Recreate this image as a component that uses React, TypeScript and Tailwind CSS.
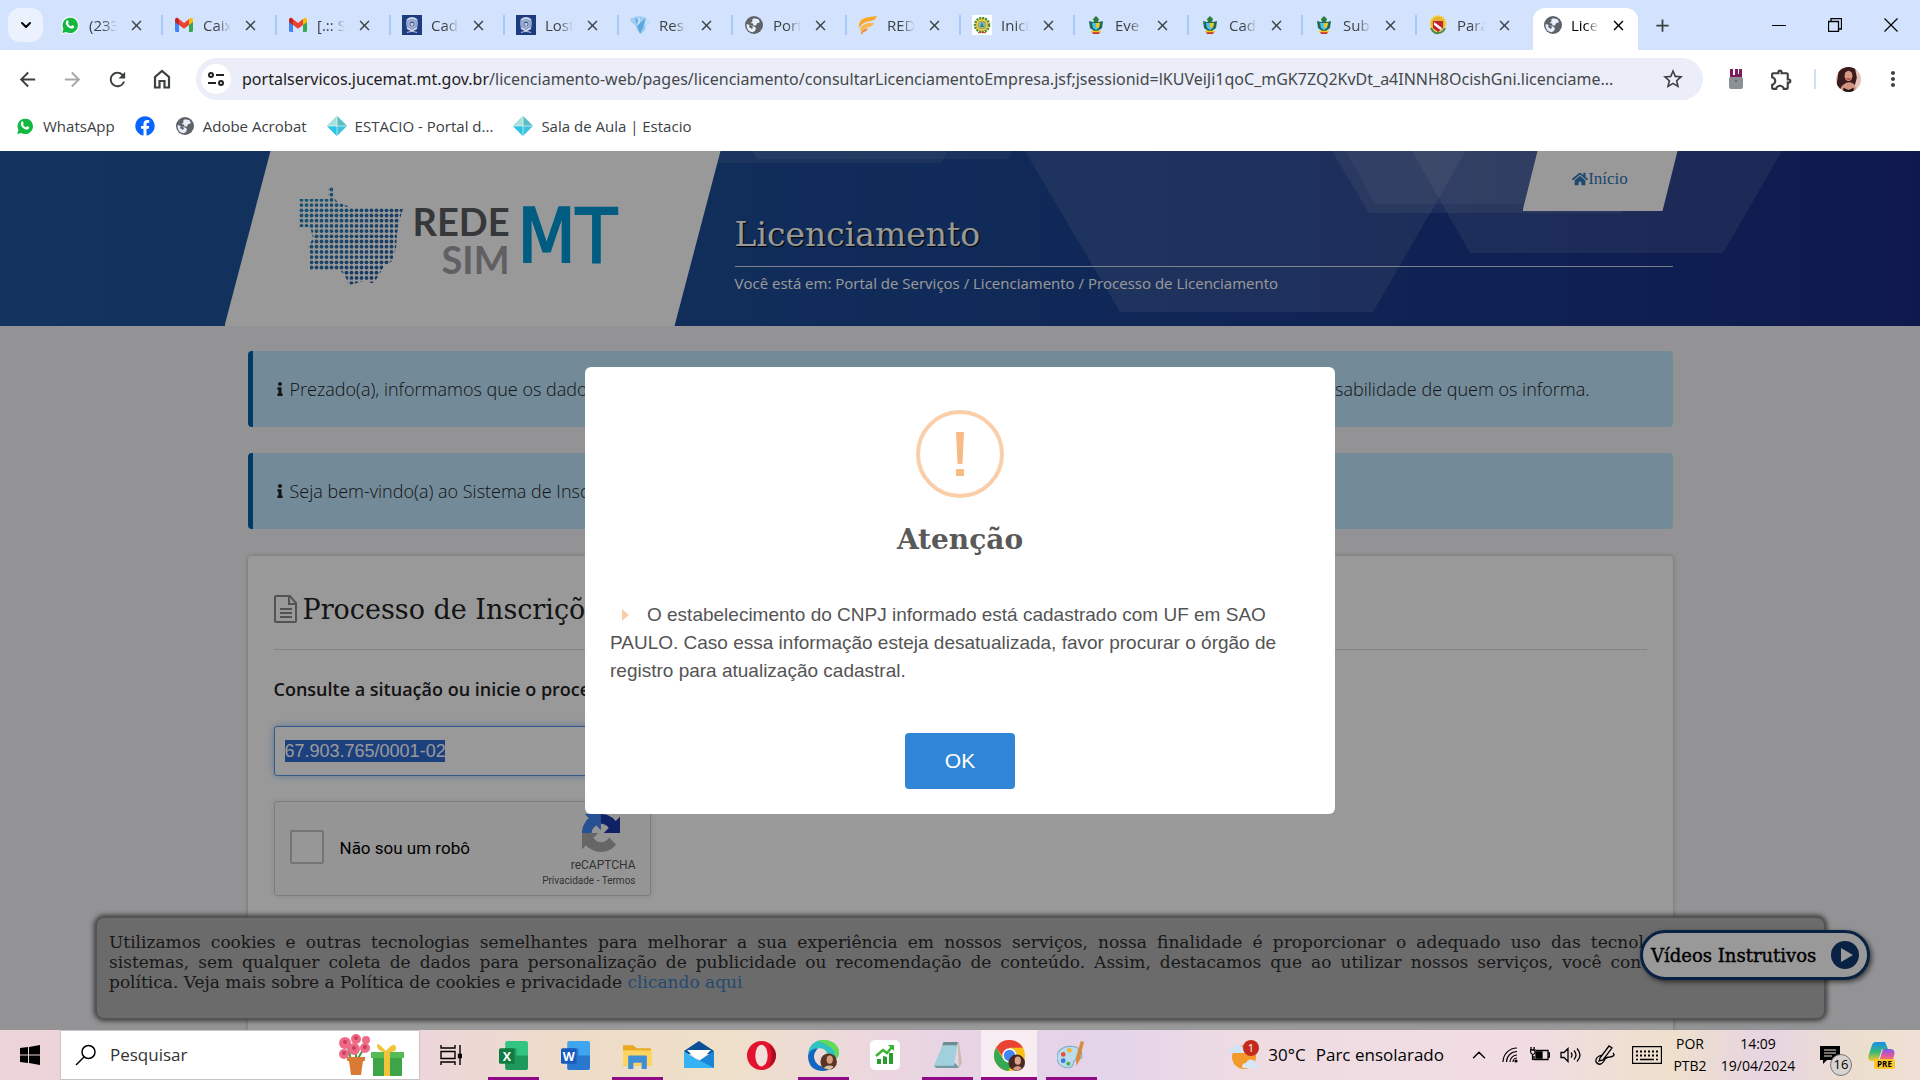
import React from "react";
import {
  MdArrowBack,
  MdArrowForward,
  MdRefresh,
  MdOutlineHome,
  MdStarBorder,
  MdOutlineExtension,
  MdMoreVert,
  MdClose,
  MdAdd,
} from "react-icons/md";
import { FaInfo, FaHome, FaFacebook } from "react-icons/fa";
import { ChevronDown, ChevronUp } from "lucide-react";

const UI = "font-['Open_Sans','Noto_Sans',sans-serif]";
const SLAB = "font-['DejaVu_Serif',serif]";

function WhatsApp() {
  return (
    <svg viewBox="0 0 20 20" className="h-5 w-5 shrink-0">
      <path d="M1 19.300l1.400-4.800A8.800 8.800 0 1 1 5.600 17.800z" fill="#fff" />
      <path d="M2.200 18l1.200-4.100A7.700 7.700 0 1 1 6.200 16.900z" fill="#12b83f" />
      <path d="M6.800 5.600c.5-.5 1-.4 1.200 0l.7 1.600c.1.400-.5 1-.7 1.200.6 1.300 1.700 2.300 3.200 2.900.4-.4.800-1.100 1.200-1l1.600.8c.4.300.1 2-1.300 2.400-1.300.4-3.700-.4-5.400-2.300C5.600 9.400 5.200 7 6.800 5.600z" fill="#fff" />
    </svg>
  );
}

function Gmail() {
  return (
    <svg viewBox="0 0 20 16" className="h-4 w-5 shrink-0">
      <path d="M1 3v10.500Q1 15 2.500 15H5V6z" fill="#4285f4" />
      <path d="M15 6v9h2.500Q19 15 19 13.500V3z" fill="#34a853" />
      <path d="M15 2.500V8l4-3V3c0-2-2-2.700-3.300-1.700z" fill="#fbbc04" />
      <path d="M5 2.500V8L1 5V3c0-2 2-2.700 3.300-1.700z" fill="#c5221f" />
      <path d="M5 2l5 4 5-4v6l-5 3.800L5 8z" fill="#ea4335" />
    </svg>
  );
}

function Police() {
  return (
    <svg viewBox="0 0 20 20" className="h-5 w-5 shrink-0">
      <rect width="20" height="20" fill="#1d3b80" />
      <path d="M5 4q5-4 10 0 2 4 0 9l-5 3-5-3Q3 8 5 4z" fill="#8fa2cc" />
      <path d="M5 5q5-4 10 0M5 13l5 3 5-3" fill="none" stroke="#d3dae9" strokeWidth="1.500" />
      <circle cx="10" cy="9" r="3.200" fill="#3a568f" stroke="#c5cee2" />
      <path d="M8.500 8h3v2l-1.500 1.500L8.500 10z" fill="#c5cee2" />
      <path d="M5 17.500q5-2 10 0" stroke="#b9c3da" strokeWidth="1.200" fill="none" />
    </svg>
  );
}

function Globe() {
  return (
    <svg viewBox="0 0 20 20" className="h-5 w-5 shrink-0">
      <circle cx="10" cy="10" r="9" fill="#5f6368" />
      <path d="M10 3.200l4.500 1 1.500 3-3 1-1 2.300H9.500l-.5-2L6.500 8l2-1.500-.3-2z" fill="#e8effc" />
      <path d="M2.600 9l4.700 1.500 2.700 1 2 1.500-1 3-2.500 1.200q-5.500-1-5.900-6.200z" fill="#e8effc" />
      <path d="M6 9.500l3 2.500-1 2-3-2z" fill="#5f6368" />
    </svg>
  );
}

function Bird() {
  return (
    <svg viewBox="0 0 20 20" className="h-5 w-5 shrink-0">
      <path d="M0 4l5-2 5-1 6 2 4 4-4 3-1 5-4 4-4-4-2-5-4-3z" fill="#9ccdf2" />
      <path d="M5 2l5 6 6-5-3 10-3 6-3-8z" fill="#5ea8e2" />
      <path d="M10 1v7l-4 4zM16 3l-2 8 6-4z" fill="#c4e2f8" />
    </svg>
  );
}

function Wing() {
  return (
    <svg viewBox="0 0 20 20" className="h-5 w-5 shrink-0">
      <path d="M1 9Q2 3 12 2l7-1q-1 4-6 5Q4 7 1 13z" fill="#f9a825" />
      <path d="M2 14q2-5 9-6h5q-1 3-5 4-6 1-8 5z" fill="#fbb847" />
      <path d="M3 18q1-4 7-5-1 3-4 4-2 .5-2 3z" fill="#f08c2e" />
    </svg>
  );
}

function Seal() {
  return (
    <svg viewBox="0 0 20 20" className="h-5 w-5 shrink-0">
      <rect width="20" height="20" fill="#fff" />
      <circle cx="10" cy="10" r="7" fill="#f4d745" stroke="#4d8a3a" strokeWidth="2.500" strokeDasharray="2 1" />
      <circle cx="10" cy="10" r="4" fill="#7ab8dc" stroke="#c69a2c" />
      <path d="M8 12l2-5 2 5z" fill="#3b8f4a" />
      <path d="M6 18q4-2 8 0" stroke="#c0392b" fill="none" />
    </svg>
  );
}

function Crest() {
  return (
    <svg viewBox="0 0 20 20" className="h-5 w-5 shrink-0">
      <path d="M7 4l3-3 3 3-1 3H8z" fill="#2a7d3a" />
      <path d="M3 6l4 1h6l4-1-1 7-4 3H8l-4-3z" fill="#1f6a5b" />
      <path d="M6 8h8l-1 5-3 2-3-2z" fill="#4fc0e8" />
      <path d="M10 8h4l-1 4-3 1z" fill="#f5c518" />
      <path d="M6 17h8l-1 2H7z" fill="#c9342b" />
      <path d="M5 16.500h10" stroke="#f5c518" strokeWidth="1.500" />
    </svg>
  );
}

function ParaCrest() {
  return (
    <svg viewBox="0 0 20 20" className="h-5 w-5 shrink-0">
      <circle cx="10" cy="8.500" r="7.500" fill="#e9b52c" stroke="#f4d03f" strokeWidth="2" strokeDasharray="1.500 1" />
      <path d="M5 6h10v7l-5 4-5-4z" fill="#c0262b" />
      <path d="M6 7l8 6-1.500 2L6 10z" fill="#fff" />
      <path d="M3 13q3 6 7 5 5 0 7-5" stroke="#4d8a3a" strokeWidth="2" fill="none" />
    </svg>
  );
}

function Diamond() {
  return (
    <svg viewBox="0 0 20 20" className="h-5 w-5 shrink-0">
      <path d="M10 0l10 10-10 10L0 10z" fill="#3fc3dc" />
      <path d="M10 0v10H0z" fill="#a9e0dc" />
      <path d="M10 0v10h10z" fill="#5dbfc0" />
      <path d="M10 10v10L0 10z" fill="#29c4e8" />
      <path d="M0 10h20M10 0v20" stroke="#fff" strokeWidth=".6" />
    </svg>
  );
}

function Avatar({ className }: { className: string }) {
  return (
    <svg viewBox="0 0 24 24" className={className}>
      <defs>
        <clipPath id="avatar-clip">
          <circle cx="12" cy="12" r="12" />
        </clipPath>
      </defs>
      <g clipPath="url(#avatar-clip)">
        <rect width="24" height="24" fill="#e3c4b8" />
        <path d="M3 0h15l2 10-2 8H6l-3 5-3-2z" fill="#3a1a1c" />
        <ellipse cx="12" cy="8.500" rx="3.800" ry="5" fill="#d79b83" />
        <path d="M6 18q6-6 12-1l2 7H5z" fill="#cf957f" />
        <path d="M7 20l5 2 5-2v4H7z" fill="#231417" />
        <path d="M10 11q2 1.300 4 0" stroke="#a32735" fill="none" />
      </g>
    </svg>
  );
}

const tabs = [
  { label: "(233", icon: <WhatsApp /> },
  { label: "Caix", icon: <Gmail /> },
  { label: "[.:: S", icon: <Gmail /> },
  { label: "Cad", icon: <Police /> },
  { label: "Lost", icon: <Police /> },
  { label: "Res", icon: <Bird /> },
  { label: "Port", icon: <Globe /> },
  { label: "RED", icon: <Wing /> },
  { label: "Inici", icon: <Seal /> },
  { label: "Eve", icon: <Crest /> },
  { label: "Cad", icon: <Crest /> },
  { label: "Sub", icon: <Crest /> },
  { label: "Par\u00e1", icon: <ParaCrest /> },
];

function TabLabel({ text }: { text: string }) {
  return (
    <span className="w-7 whitespace-nowrap [mask-image:linear-gradient(to_right,black_50%,transparent)]">
      {text}
    </span>
  );
}

function TabStrip() {
  return (
    <div className="flex h-[50px] shrink-0 items-center bg-[#d3e3fd] pl-2 text-[15px] text-[#3c4043]">
      <button aria-label="Pesquisar guias" className="flex h-[34px] w-[35px] items-center justify-center rounded-xl bg-[#ebf2fe]">
        <ChevronDown size={16} strokeWidth={3} className="text-black" />
      </button>
      <div className="ml-[6px] flex">
        {tabs.map((t, i) => (
          <div key={i} className="flex h-5 w-[114px] items-center border-r-2 border-[#a8c7fa] pl-[11px] nth-[13]:border-transparent">
            {t.icon}
            <span className="w-[9px]" />
            <TabLabel text={t.label} />
            <button aria-label={"Fechar " + t.label} className="ml-[11px]">
              <MdClose size={17} className="text-[#3c4043]" />
            </button>
          </div>
        ))}
      </div>
      <div className="ml-[2px] flex h-[42px] w-[105px] items-center self-end rounded-t-xl bg-white pb-2 pl-[10px] text-black">
        <Globe />
        <span className="w-2" />
        <TabLabel text="Lice" />
        <button aria-label="Fechar guia" className="ml-[11px]">
          <MdClose size={17} />
        </button>
      </div>
      <button aria-label="Nova guia" className="ml-[14px]">
        <MdAdd size={21} />
      </button>
      <div className="ml-auto flex items-center gap-[42px] pr-[22px] text-black">
        <button aria-label="Minimizar">
          <svg width="14" height="14"><path d="M0 7.500h14" stroke="currentColor" /></svg>
        </button>
        <button aria-label="Restaurar">
          <svg width="14" height="14" fill="none" stroke="currentColor">
            <path d="M.5 3.500h10v10H.5zM3 3V.5h10.500V11H11" strokeWidth="1.300" />
          </svg>
        </button>
        <button aria-label="Fechar">
          <svg width="14" height="14"><path d="M.5.5l13 13M13.500.5l-13 13" stroke="currentColor" strokeWidth="1.200" /></svg>
        </button>
      </div>
    </div>
  );
}

function Toolbar() {
  return (
    <div className="flex h-[58px] shrink-0 items-center bg-white pr-[15px] pl-4 text-[#3c4043]">
      <div className="flex w-[180px] shrink-0 items-center gap-[22px]">
        <button aria-label="Voltar"><MdArrowBack size={23} /></button>
        <button aria-label="Avançar" className="text-[#a5a7aa]"><MdArrowForward size={23} /></button>
        <button aria-label="Recarregar"><MdRefresh size={23} /></button>
        <button aria-label="Página inicial">
          <svg width="22" height="22" viewBox="0 0 22 22" fill="none" stroke="currentColor" strokeWidth="2.200">
            <path d="M4 9v10.500h4.500V13h5v6.500H18V9l-7-6z" />
          </svg>
        </button>
      </div>
      <div className="flex h-[42px] min-w-0 flex-1 items-center rounded-full bg-[#ebeef8] pr-[18px] pl-[5px]">
        <button aria-label="Informações do site" className="flex h-[30px] w-[30px] shrink-0 items-center justify-center rounded-full bg-white">
          <svg width="16" height="16" viewBox="0 0 16 16" fill="none" stroke="#202124" strokeWidth="2">
            <circle cx="3" cy="4" r="2" />
            <path d="M8 4h8M0 12h8" />
            <circle cx="13" cy="12" r="2" />
          </svg>
        </button>
        <div className="ml-[11px] min-w-0 flex-1 font-['Noto_Sans',sans-serif] text-[16px] whitespace-nowrap text-[#45484c]">
          <span className="text-[#1f2023]">portalservicos.jucemat.mt.gov.br</span>
          /licenciamento-web/pages/licenciamento/consultarLicenciamentoEmpresa.jsf;jsessionid=lKUVeiJi1qoC_mGK7ZQ2KvDt_a4INNH8OcishGni.licenciame...
        </div>
        <button aria-label="Adicionar aos favoritos"><MdStarBorder size={24} /></button>
      </div>
      <div className="ml-6 flex items-center">
        <svg width="18" height="22" viewBox="0 0 18 22">
          <path d="M3 1h12v9H3z" fill="#7b1c5c" />
          <path d="M6 1h2v6H6zM11 1h1v5h-1z" fill="#fff" />
          <rect x="2" y="9" width="14" height="12" rx="2" fill="#8b9196" />
          <circle cx="9" cy="13" r="1" fill="#5b6064" />
        </svg>
        <button aria-label="Extensões" className="ml-6"><MdOutlineExtension size={25} /></button>
        <span className="ml-5 h-5 w-[2px] bg-[#cfe0fc]" />
        <Avatar className="ml-5 h-[25px] w-[25px]" />
        <button aria-label="Menu" className="ml-5"><MdMoreVert size={24} /></button>
      </div>
    </div>
  );
}

function Bookmarks() {
  const item = "flex items-center gap-2 leading-5";
  return (
    <nav className="flex h-[43px] shrink-0 items-start bg-white pt-2 pl-[15px] text-[15px] text-[#3c4043]">
      <a href="#" className={item}><WhatsApp />WhatsApp</a>
      <a href="#" aria-label="Facebook" className="ml-5 rounded-full text-[#0866ff]"><FaFacebook size={20} /></a>
      <a href="#" className={item + " ml-5"}><Globe />Adobe Acrobat</a>
      <a href="#" className={item + " ml-5"}><Diamond />ESTACIO - Portal d...</a>
      <a href="#" className={item + " ml-5"}><Diamond />Sala de Aula | Estacio</a>
    </nav>
  );
}

function StateMap() {
  return (
    <svg viewBox="0 0 104 98" className="h-[98px] w-[104px] shrink-0">
      <defs>
        <linearGradient id="mapfade" x1="0" y1="0" x2="1" y2="1">
          <stop offset="0" stopColor="#2f8fc4" />
          <stop offset="1" stopColor="#24539c" />
        </linearGradient>
        <mask id="dotmask">
          <rect width="104" height="98" fill="#000" />
          {Array.from({ length: 19 }, (_, r) =>
            Array.from({ length: 21 }, (_, c) => (
              <circle key={r + "-" + c} cx={2.5 + c * 5} cy={2.5 + r * 5.2} r="1.900" fill="#fff" />
            ))
          )}
        </mask>
      </defs>
      <path
        d="M29 0h5l1 11 5 5 12 4 52 2-4 13-2 12-1 15-4 12-8 5-5 9-5 8h-3l-4-3-10 3-8 2-4-9-5-6H11l0-18-2-5 5-9-3-11H0V12h29z"
        fill="url(#mapfade)"
        mask="url(#dotmask)"
      />
    </svg>
  );
}

function Logo() {
  return (
    <div className="flex items-center">
      <StateMap />
      <div className="mt-2 ml-[10px] flex flex-col items-end font-['Lato',sans-serif] text-[38px] leading-[38px] font-bold">
        <span className="text-[#5a5d60]">REDE</span>
        <span className="text-[#a0a1a6]">SIM</span>
      </div>
      <span className="ml-2 font-['DejaVu_Sans_Condensed','Lato',sans-serif] text-[75px] leading-[80px] text-[#009ad8] [-webkit-text-stroke:2px_#009ad8]">MT</span>
    </div>
  );
}

function SiteHeader() {
  return (
    <header className="relative h-[175px] bg-linear-to-r from-[#20589f] via-[#1c4794] to-[#192b82]">
      <svg viewBox="0 0 1920 175" preserveAspectRatio="none" className="absolute inset-0 h-full w-full" fill="#fff">
        <path d="M719 0h228l-6 12H717z" opacity=".08" />
        <path d="M752 0h261l-5 8H757z" opacity=".08" />
        <path d="M1025 0h441l-93 161h-253z" opacity=".1" />
        <path d="M1332 0h330l-41 62h-252z" opacity=".1" />
        <path d="M1346 0h192l-13 53h-150z" opacity=".07" />
        <path d="M1412 0h370l-59 102h-253z" opacity=".1" />
      </svg>
      <div className="relative mx-auto flex h-full w-[1425px] max-w-full">
        <div className="-ml-[23px] flex w-[496px] shrink-0 bg-white pt-9 pl-[74px] [clip-path:polygon(46px_0,100%_0,450px_100%,0_100%)]">
          <div><Logo /></div>
        </div>
        <div className="ml-[14px] flex min-w-0 flex-1 flex-col text-white">
          <div className="-mr-[5px] flex h-[60px] w-[155px] shrink-0 items-center justify-center self-end bg-white pb-1 [clip-path:polygon(15px_0,100%_0,140px_100%,0_100%)]">
            <a href="#" className="flex items-center font-['Liberation_Serif',serif] text-[17px] text-[#337ab7]">
              <FaHome size={16} />Início
            </a>
          </div>
          <h1 className={SLAB + " h-14 border-b border-white/80 text-[33px] leading-[48px] [text-shadow:1px_1px_1px_#000]"}>
            Licenciamento
          </h1>
          <p className="mt-[6px] text-[15px] leading-5">
            Você está em: <a href="#">Portal de Serviços</a> / <a href="#">Licenciamento</a> / <a href="#">Processo de Licenciamento</a>
          </p>
        </div>
      </div>
    </header>
  );
}

function Alert({ start, end }: { start: string; end?: string }) {
  return (
    <div className="flex h-[76px] items-center rounded border-l-[5px] border-[#0061aa] bg-[#c0e6ff] pr-[83px] pl-6 text-[18px] font-light text-[#222]">
      <FaInfo size={14} className="mr-[3px] -ml-1 shrink-0" />
      <span className="flex-1 whitespace-nowrap">{start}</span>
      <span className="whitespace-nowrap">{end}</span>
    </div>
  );
}

function Recaptcha() {
  return (
    <div className="mt-[25px] flex h-[95px] w-[377px] items-center rounded-[3px] border border-[#d3d3d3] bg-[#f9f9f9] pl-[15px] font-['Roboto',sans-serif] shadow-[0_0_4px_1px_rgba(0,0,0,0.08)]">
      <input id="robot" type="checkbox" className="mb-1 h-[34px] w-[34px] appearance-none rounded-[2px] border-2 border-[#c1c1c1] bg-[#fcfcfc]" />
      <label htmlFor="robot" className="ml-4 text-[17px] text-black">Não sou um robô</label>
      <div className="mt-1 mr-[14px] ml-auto flex flex-col items-end text-[#555]">
        <svg viewBox="0 0 64 64" className="mr-4 h-[38px] w-[38px]">
          <path d="M64 31.955l-.033-1.370V4.687l-7.160 7.160C50.948 4.674 42.033.093 32.050.093c-10.400 0-19.622 4.960-25.458 12.640l11.736 11.860a15.550 15.550 0 0 1 4.754-5.334c2.050-1.600 4.952-2.906 8.968-2.906.485 0 .86.057 1.135.163 4.976.393 9.288 3.140 11.828 7.124l-8.307 8.307L64 31.953" fill="#1c3aa9" />
          <path d="M31.862.094l-1.370.033H4.594l7.160 7.160C4.580 13.147 0 22.060 0 32.046c0 10.400 4.960 19.622 12.640 25.458L24.500 45.768a15.550 15.550 0 0 1-5.334-4.754c-1.600-2.050-2.906-4.952-2.906-8.968 0-.485.057-.86.163-1.135.393-4.976 3.140-9.288 7.124-11.828l8.307 8.307L31.860.095" fill="#4285f4" />
          <path d="M.001 32.045l.033 1.370v25.898l7.160-7.160c5.860 7.173 14.774 11.754 24.760 11.754 10.400 0 19.622-4.960 25.458-12.640l-11.736-11.860a15.550 15.550 0 0 1-4.754 5.334c-2.050 1.600-4.952 2.906-8.968 2.906-.485 0-.86-.057-1.135-.163-4.976-.393-9.288-3.140-11.828-7.124l8.307-8.307L0 32.044" fill="#ababab" />
        </svg>
        <span className="mt-1 text-[12px] leading-[18px]">reCAPTCHA</span>
        <span className="text-[10px] leading-[14px] whitespace-nowrap"><a href="#">Privacidade</a> - <a href="#">Termos</a></span>
      </div>
    </div>
  );
}

function MainContent() {
  return (
    <main className="mx-auto w-[1425px] max-w-full pt-[25px]">
      <Alert start="Prezado(a), informamos que os dados" end="de inteira responsabilidade de quem os informa." />
      <div className="h-[26px]" />
      <Alert start="Seja bem-vindo(a) ao Sistema de Inscrições" />
      <section className="mt-[27px] h-[520px] rounded bg-white px-[26px] pt-[31px] shadow-[0_0_4px_rgba(0,0,0,0.25)]">
        <h2 className={SLAB + " flex h-[63px] items-start border-b border-[#ddd] text-[27px] leading-[46px] text-[#222]"}>
          <svg viewBox="0 0 24 28" className="mt-2 mr-[5px] h-7 w-6" fill="none" stroke="#8a8a8f" strokeWidth="2">
            <path d="M2 1h14l6 7v18q0 1-1 1H2q-1 0-1-1V2q0-1 1-1zM15 1v8h7M6 14h12M6 18h12M6 22h12" />
          </svg>
          Processo de Inscrições
        </h2>
        <label htmlFor="cnpj" className="mt-[23px] block text-[18px] leading-8 font-semibold text-[#222]">
          Consulte a situação ou inicie o processo
        </label>
        <div className="mt-[21px] flex h-[50px] w-1/2 items-center rounded-[3px] border border-[#5a94ec] bg-white pl-[10px] font-['Liberation_Sans',sans-serif] text-[18px] shadow-[0_0_7px_rgba(90,160,240,0.6)]">
          <input
            id="cnpj"
            type="text"
            defaultValue="67.903.765/0001-02"
            className="h-[22px] w-[160px] bg-[#306ad2] text-white outline-none"
          />
        </div>
        <Recaptcha />
      </section>
    </main>
  );
}

function CookieBar() {
  const line = "whitespace-nowrap [text-align-last:justify]";
  return (
    <div className="absolute top-[766px] right-[95px] left-[96px] h-[102px] rounded-lg border border-[#8c8c8c] bg-[#b2b2b2] px-3 pt-[14px] shadow-[0_0_5px_2px_rgba(0,0,0,0.6)]">
      <div className={SLAB + " text-[17px] leading-[20px] text-[#2a2a2a]"}>
        <p className={line}>Utilizamos cookies e outras tecnologias semelhantes para melhorar a sua experiência em nossos serviços, nossa finalidade é proporcionar o adequado uso das tecnologias em todos os</p>
        <p className={line}>sistemas, sem qualquer coleta de dados para personalização de publicidade ou recomendação de conteúdo. Assim, destacamos que ao utilizar nossos serviços, você concorda com a nossa</p>
        <p>política. Veja mais sobre a Política de cookies e privacidade <a href="#" className="text-[#3a7dbb]">clicando aqui</a></p>
      </div>
    </div>
  );
}

function VideosButton() {
  return (
    <button className={SLAB + " absolute top-[779px] right-[50px] flex h-[50px] w-[230px] items-center justify-between rounded-full border-[3px] border-[#103a70] bg-white px-2 text-[18px] text-black shadow-[2px_2px_5px_rgba(0,0,0,0.6)] [-webkit-text-stroke:0.4px_black]"}>
      Vídeos Instrutivos
      <svg viewBox="0 0 28 28" className="h-7 w-7 shrink-0">
        <circle cx="14" cy="14" r="14" fill="#103a70" />
        <path d="M10 7l12 7-12 7z" fill="#fff" />
      </svg>
    </button>
  );
}

function Dialog() {
  return (
    <div className="absolute inset-0 flex items-center justify-center bg-black/40">
      <div role="dialog" aria-labelledby="dlg-title" className="flex w-[750px] flex-col items-center rounded-md bg-white px-[25px] pt-[43px] pb-[25px]">
        <div className="flex h-[88px] w-[88px] shrink-0 items-center justify-center rounded-full border-4 border-[#facea8]">
          <svg viewBox="0 0 10 44" className="h-11 w-[10px]" fill="#f8bb86">
            <path d="M1 0h8L7.500 32h-5zM1 37h8v7H1z" />
          </svg>
        </div>
        <h2 id="dlg-title" className={SLAB + " mt-[18px] text-[28px] leading-[48px] font-bold text-[#595959]"}>Atenção</h2>
        <p className="mt-[37px] w-full font-['Liberation_Sans',sans-serif] text-[19px] leading-7 text-[#545454]">
          <svg viewBox="0 0 7 12" className="mr-[18px] ml-3 inline h-3 w-[7px] align-baseline" fill="#facea8"><path d="M0 0l7 6-7 6z" /></svg>
          O estabelecimento do CNPJ informado está cadastrado com UF em SAO<br />
          PAULO. Caso essa informação esteja desatualizada, favor procurar o órgão de<br />
          registro para atualização cadastral.
        </p>
        <button className="mt-12 h-14 w-[110px] shrink-0 rounded bg-[#3085d6] font-['Liberation_Sans',sans-serif] text-[21px] text-white">OK</button>
      </div>
    </div>
  );
}

function Office({ letter, dark, light }: { letter: string; dark: string; light: string }) {
  return (
    <svg viewBox="0 0 28 28" className="h-[29px] w-[29px]">
      <rect x="6" y="0" width="22" height="28" rx="2" fill={light} />
      <path d="M6 14h22v12q0 2-2 2H8q-2 0-2-2z" fill={dark} opacity=".6" />
      <path d="M6 7h11v7H6z" fill={dark} opacity=".5" />
      <rect x="0" y="7" width="15" height="15" rx="1.500" fill={dark} />
      <text x="7.500" y="19" textAnchor="middle" fontSize="12" fontWeight="700" fill="#fff" fontFamily="Open Sans">{letter}</text>
    </svg>
  );
}

const I = "h-[29px] w-[29px]";
const apps: { name: string; open?: boolean; active?: boolean; icon: React.ReactNode }[] = [
  { name: "Excel", open: true, icon: <Office letter="X" dark="#107c41" light="#33c481" /> },
  { name: "Word", icon: <Office letter="W" dark="#185abd" light="#41a5ee" /> },
  {
    name: "Explorador", open: true, icon: (
      <svg viewBox="0 0 28 28" className={I}>
        <path d="M0 4h10l3 3h14v17H0z" fill="#e9a91e" />
        <path d="M0 9h28v15H0z" fill="#fcd462" />
        <path d="M5 27V15q0-1 1-1h16q1 0 1 1v12h-5v-6h-8v6z" fill="#3f8fd6" />
      </svg>
    ),
  },
  {
    name: "Email", icon: (
      <svg viewBox="0 0 32 28" className="h-[28px] w-8">
        <path d="M1 10L16 0l15 10v3H1z" fill="#0b4f96" />
        <path d="M4 9h24L16 21z" fill="#fff" />
        <path d="M1 10l15 10 15-10v17H1z" fill="#35b2f3" />
        <path d="M31 10v17L12 17l4 3z" fill="#1a84d6" />
      </svg>
    ),
  },
  {
    name: "Opera", icon: (
      <svg viewBox="0 0 28 28" className={I}>
        <circle cx="14" cy="14" r="14" fill="#e3122d" />
        <ellipse cx="14" cy="14" rx="6" ry="10.500" fill="#f2e0dc" />
        <path d="M20 3.500q8 4 8 10.500t-8 10.500q4-3 4-10.500t-4-10.500z" fill="#a50e20" />
      </svg>
    ),
  },
  {
    name: "Edge", open: true, icon: (
      <svg viewBox="0 0 30 30" className="h-[31px] w-[31px]">
        <path d="M0 15C0 6 6 0 15 0s15 6 15 12c0 5-4 8-8 8-5 0-5-2-4-4 2-3-1-8-7-8-4 0-9 2-11 7z" fill="#2fc2c0" />
        <path d="M9 1q3-1 6-1c9 0 15 6 15 12q0 4-3 6 0-9-8-13-5-3-10-4z" fill="#66d953" />
        <path d="M0 15q2-7 10-7-5 4-4 10 2 8 11 8l8-1q-4 5-10 5Q0 30 0 15z" fill="#1266c0" />
        <circle cx="20" cy="21" r="8" fill="#5a3523" />
        <ellipse cx="21" cy="19" rx="3" ry="4" fill="#d8a184" />
        <path d="M15 27q5-4 10-1l-4 3z" fill="#d9c1a8" />
      </svg>
    ),
  },
  {
    name: "Finanças", icon: (
      <svg viewBox="0 0 30 30" className="h-[30px] w-[30px]">
        <rect width="30" height="30" rx="5" fill="#fff" />
        <path d="M7 24v-5h4v5zM13 24v-8l4 1v7zM19 24V13h4v11z" fill="#2a9b2e" />
        <path d="M6 16l7-6 4 3 5-6" fill="none" stroke="#3ab435" strokeWidth="2.500" />
        <path d="M18 5h6v6z" fill="#3ab435" />
      </svg>
    ),
  },
  {
    name: "Bloco de notas", open: true, icon: (
      <svg viewBox="0 0 28 28" className={I}>
        <path d="M10 1h15l3 20-3 5-1-23z" fill="#c9bcae" />
        <path d="M10 2h14l-4 22H1z" fill="#9fd0dc" />
        <path d="M1 24h19l1-3 4 4-1 1H3z" fill="#6f9aa5" />
        <path d="M10 1h14l-1 3H9z" fill="#6d8b92" />
      </svg>
    ),
  },
  {
    name: "Chrome", open: true, active: true, icon: (
      <svg viewBox="0 0 30 30" className="h-[31px] w-[31px]">
        <circle cx="15" cy="15" r="15" fill="#fbc116" />
        <path d="M2 7.500A15 15 0 0 1 28 7.500H15L10 18z" fill="#ea4335" />
        <path d="M2 7.500l7 11q4 5 9 3l-4 8.500A15 15 0 0 1 2 7.500z" fill="#34a853" />
        <circle cx="15" cy="15" r="7" fill="#fff" />
        <circle cx="15" cy="15" r="5.500" fill="#4285f4" />
        <circle cx="22" cy="22" r="8" fill="#4a2722" />
        <ellipse cx="23" cy="20" rx="3" ry="4" fill="#dba58e" />
        <path d="M18 28q4-5 9-1l-4 3z" fill="#d39a85" />
      </svg>
    ),
  },
  {
    name: "Paint", open: true, icon: (
      <svg viewBox="0 0 28 28" className={I}>
        <path d="M12 5q12 0 12 9 0 4-5 4-3 0-3 3t-4 5Q0 26 0 15 1 6 12 5z" fill="#b9dcee" stroke="#7fa9c2" />
        <circle cx="6" cy="13" r="2.300" fill="#e94f3d" />
        <circle cx="12" cy="9" r="2.300" fill="#f3b52e" />
        <circle cx="6" cy="19" r="2.300" fill="#3f78d6" />
        <circle cx="11" cy="22" r="2" fill="#4cb050" />
        <path d="M23 0l3 1-4 17-3 6-1-7z" fill="#d98a3a" />
      </svg>
    ),
  },
];

function Flowers() {
  return (
    <svg viewBox="0 0 66 42" className="h-[42px] w-[66px]">
      <path d="M10 14l3 12M18 6v20M25 16l-6 10" stroke="#3c9a45" strokeWidth="2" />
      <g fill="#ee6a86">
        <circle cx="7" cy="9" r="6" /><circle cx="18" cy="5" r="5" /><circle cx="6" cy="20" r="5" />
        <circle cx="16" cy="15" r="6" /><circle cx="27" cy="14" r="5" /><circle cx="28" cy="6" r="4" />
      </g>
      <g fill="#c93d5e">
        <circle cx="7" cy="8" r="2" /><circle cx="18" cy="4" r="2" /><circle cx="16" cy="14" r="2" /><circle cx="27" cy="13" r="2" /><circle cx="6" cy="19" r="2" />
      </g>
      <path d="M9 23h18v4h-2l-2 14H13l-2-14H9z" fill="#d97b34" />
      <path d="M35 22h29v20H35z" fill="#3da548" />
      <path d="M33 18h33v6H33z" fill="#56bb55" />
      <path d="M46 18h6v24h-6zM48 18q-8 0-9-6t9 5q8-10 10-4t-10 5z" fill="#f2c43a" />
    </svg>
  );
}

function Taskbar() {
  return (
    <footer className="flex h-[50px] shrink-0 items-stretch bg-[linear-gradient(90deg,#ecd3d8_0%,#ecd6da_22%,#eddcc8_30%,#efe0c9_38%,#ebd6e0_46%,#e6d3e6_52%,#e4d4ea_58%,#efdce2_65%,#f0dce2_80%,#eee0cc_87%,#e7d4e2_92%,#ecdfcd_97%,#efdfd6_100%)] text-black">
      <button aria-label="Iniciar" className="flex w-[60px] items-center justify-center">
        <svg viewBox="0 0 20 20" className="h-5 w-5"><path d="M0 3l8-1v7.500H0zM9 1.900L20 0v9.500H9zM0 10.500h8V18l-8-1zM9 10.500h11V20L9 18.100z" /></svg>
      </button>
      <div className="flex w-[360px] items-center border border-[#c9c3c5] bg-white pl-[14px]">
        <svg viewBox="0 0 22 22" className="h-[22px] w-[22px] shrink-0" fill="none" stroke="#000" strokeWidth="1.500">
          <circle cx="13.500" cy="8" r="6.500" /><path d="M9 13l-8 8" />
        </svg>
        <label htmlFor="search" className="sr-only">Pesquisar</label>
        <input id="search" type="text" placeholder="Pesquisar" className="ml-[13px] w-[228px] bg-transparent text-[17px] outline-none placeholder:text-[#333]" />
        <Flowers />
      </div>
      <button aria-label="Visão de tarefas" className="flex w-[62px] items-center justify-center">
        <svg viewBox="0 0 22 22" className="h-[22px] w-[22px]" fill="none" stroke="#000" strokeWidth="1.400">
          <path d="M1 1v3h14V1M1 21v-3h14v3M1 7.500h14v7H1zM20 1v9M20 14v7" /><path d="M18.500 10.500h3v3h-3z" fill="#000" />
        </svg>
      </button>
      {apps.map((a) => (
        <button key={a.name} aria-label={a.name} className="flex w-[62px] flex-col items-center justify-end px-[3px]">
          <span className={"flex w-full flex-1 items-center justify-center pt-[3px] " + (a.active ? "bg-[#f6ecf2]" : "")}>{a.icon}</span>
          <span className={"h-[3px] " + (a.active ? "w-full bg-[#8f0a86]" : a.open ? "w-[51px] bg-[#8f0a86]" : "w-[51px]")} />
        </button>
      ))}
      <div className="ml-auto flex items-center pr-6 text-[17px]">
        <svg viewBox="0 0 32 30" className="h-[30px] w-8">
          <circle cx="16" cy="17" r="12" fill="#f39a2b" />
          <path d="M1 12q0-4 4-4 2-5 7-3 3 1 3 4 4 1 2 4H3q-2 0-2-1z" fill="#cfe2f7" />
          <path d="M14 27q0-4 4-4 2-5 7-3 3 1 3 4 4 1 2 4H16q-2 0-2-1z" fill="#d7e6f8" />
          <circle cx="23" cy="8" r="8" fill="#c42b1c" />
          <text x="23" y="12" textAnchor="middle" fontSize="11" fill="#fff" fontFamily="Open Sans">1</text>
        </svg>
        <span className="ml-2">30°C</span>
        <span className="ml-[10px] whitespace-nowrap">Parc ensolarado</span>
        <ChevronUp size={22} strokeWidth={1.5} className="ml-6" />
        <svg viewBox="0 0 16 16" className="ml-3 h-4 w-4" fill="none" stroke="#000" strokeWidth="1.200">
          <path d="M1 15A14 14 0 0 1 15 1M4.500 15A10.500 10.500 0 0 1 15 4.500M8 15a7 7 0 0 1 7-7M11 15a4 4 0 0 1 4-4" /><circle cx="14" cy="14" r="1" fill="#000" />
        </svg>
        <svg viewBox="0 0 20 16" className="ml-3 h-4 w-5" fill="none" stroke="#000" strokeWidth="1.300">
          <path d="M6 3.500h12v9H4V9M18.500 6h1v4h-1M1 0v3M4 0v3M0 3h5v3q-2 3-4 0zM2.500 7v6" /><path d="M6 5h6v6H6z" fill="#000" />
        </svg>
        <svg viewBox="0 0 22 16" className="ml-[10px] h-4 w-[22px]" fill="none" stroke="#000" strokeWidth="1.300">
          <path d="M1 5.500h3l4-4v13l-4-4H1zM11 5.500q2 2.500 0 5M14 3.500q4 4.500 0 9M17 1.500q6 6.500 0 13" />
        </svg>
        <svg viewBox="0 0 22 20" className="ml-3 h-5 w-[22px]" fill="none" stroke="#000" strokeWidth="1.300">
          <path d="M6 13L15 1l3 2-9 12-4 1zM8 10q-7 2-6 7 4 5 8-1 1-4 6-4 6-1 3-4" />
        </svg>
        <svg viewBox="0 0 30 18" className="ml-4 h-[18px] w-[30px]" fill="none" stroke="#000">
          <path d="M.5.5h29v17H.5z" strokeWidth="1.300" /><path d="M4 5.500h22M4 9.500h22" strokeWidth="2" strokeDasharray="2 2" /><path d="M4 13.500h2M8 13.500h14M24 13.500h2" strokeWidth="1.500" />
        </svg>
        <span className="ml-[11px] w-[34px] text-center text-[14px] leading-[22px]">POR<br />PTB2</span>
        <span className="ml-3 w-[78px] text-center text-[14px] leading-[22px]">14:09<br />19/04/2024</span>
        <span className="relative ml-[23px] h-[34px] w-[32px]">
          <svg viewBox="0 0 20 18" className="mt-2 h-[18px] w-5"><path d="M0 0h20v14H7l-4 4v-4H0z" /><path d="M4 4h12M4 7h12M4 10h8" stroke="#ecdfd0" strokeWidth="1.200" /></svg>
          <span className="absolute right-0 bottom-[-4px] flex h-[22px] w-[22px] items-center justify-center rounded-full border border-[#777] bg-[#d8d2d0] text-[13px]">16</span>
        </span>
        <svg viewBox="0 0 28 28" className="ml-4 h-7 w-7">
          <defs>
            <linearGradient id="cop-a" x1="0" y1="0" x2="0" y2="1"><stop offset="0" stopColor="#1a8df0" /><stop offset=".5" stopColor="#34b878" /><stop offset="1" stopColor="#f4c62c" /></linearGradient>
            <linearGradient id="cop-b" x1="0" y1="0" x2="0" y2="1"><stop offset="0" stopColor="#7a5be8" /><stop offset=".5" stopColor="#e0559f" /><stop offset="1" stopColor="#f58a4b" /></linearGradient>
          </defs>
          <path d="M8 1h9l3 7h-6l-4 12H3q-4-1-2-7l3-9q1-3 4-3z" fill="url(#cop-a)" />
          <path d="M15 8h8q5 1 3 7l-2 6H11z" fill="url(#cop-b)" />
          <rect x="6" y="18" width="21" height="10" rx="2" fill="#fdc52c" />
          <text x="16.500" y="26" textAnchor="middle" fontSize="8" fontWeight="700" fontFamily="Open Sans">PRE</text>
        </svg>
      </div>
    </footer>
  );
}

export default function App() {
  return (
    <div className={UI + " flex h-screen flex-col overflow-hidden bg-white"}>
      <TabStrip />
      <Toolbar />
      <Bookmarks />
      <div className="relative min-h-0 flex-1 overflow-hidden bg-[#f5f5f8]">
        <SiteHeader />
        <MainContent />
        <CookieBar />
        <VideosButton />
        <Dialog />
      </div>
      <Taskbar />
    </div>
  );
}
